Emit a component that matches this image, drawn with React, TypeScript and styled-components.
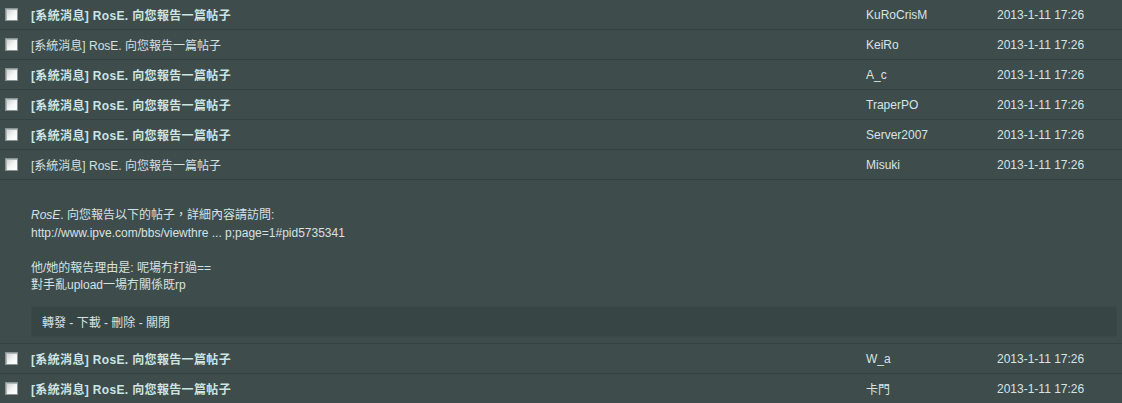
import React from "react";
import styled, { createGlobalStyle } from "styled-components";

const GlobalStyle = createGlobalStyle`
  html, body {
    margin: 0;
    padding: 0;
    background: #3e4c4c;
  }
  body {
    font-family: "Liberation Sans", Arial, "Noto Sans CJK TC", sans-serif;
    font-size: 12px;
    color: #d4e2e2;
  }
`;

type Msg = { from: string; unread: boolean; open?: boolean };

const messages: Msg[] = [
  { from: "KuRoCrisM", unread: true },
  { from: "KeiRo", unread: false },
  { from: "A_c", unread: true },
  { from: "TraperPO", unread: true },
  { from: "Server2007", unread: true },
  { from: "Misuki", unread: false, open: true },
  { from: "W_a", unread: true },
  { from: "卡門", unread: true },
];

const List = styled.div`
  width: 1122px;
  display: flex;
  flex-direction: column;
`;

const Row = styled.div`
  display: grid;
  grid-template-columns: 31px 835px 131px 1fr;
  align-items: center;
  height: 30px;
  box-sizing: border-box;
  border-bottom: 1px solid #354242;
`;

const Check = styled.span`
  display: block;
  width: 11px;
  height: 11px;
  margin-left: 5px;
  border: 1px solid #8a9494;
  background: linear-gradient(135deg, #c8cccc 0%, #f4f6f6 55%, #ffffff 100%);
  box-shadow: inset 1px 1px 0 #b0b6b6;
`;

const Subject = styled.span<{ $unread: boolean }>`
  font-weight: ${(p) => (p.$unread ? "bold" : "normal")};
  color: ${(p) => (p.$unread ? "#cde4e4" : "#d4e0e0")};
  letter-spacing: ${(p) => (p.$unread ? "0.35px" : "0")};
  white-space: nowrap;
`;

const Cell = styled.span`
  color: #d6e4e4;
  white-space: nowrap;
`;

const Detail = styled.div`
  box-sizing: border-box;
  height: 164px;
  padding: 27px 5px 0 31px;
  border-bottom: 1px solid #354242;
  display: flex;
  flex-direction: column;
`;

const Body = styled.div`
  line-height: 17.5px;
  color: #d6e2e2;
`;

const Actions = styled.div`
  margin-top: 11px;
  height: 31px;
  box-sizing: border-box;
  display: flex;
  align-items: center;
  padding-left: 10px;
  background: #384545;
  border: 1px solid #3b4848;
  color: #d6e2e2;
`;

const subject = "[系統消息] RosE. 向您報告一篇帖子";

export default function App() {
  return (
    <>
      <GlobalStyle />
      <List>
        {messages.map((m, i) => (
          <React.Fragment key={i}>
            <Row>
              <Check />
              <Subject $unread={m.unread}>{subject}</Subject>
              <Cell>{m.from}</Cell>
              <Cell>2013-1-11 17:26</Cell>
            </Row>
            {m.open && (
              <Detail>
                <Body>
                  <i>RosE</i>. 向您報告以下的帖子，詳細內容請訪問:
                  <br />
                  http://www.ipve.com/bbs/viewthre ... p;page=1#pid5735341
                  <br />
                  <br />
                  他/她的報告理由是: 呢場冇打過==
                  <br />
                  對手亂upload一場冇關係既rp
                </Body>
                <Actions>轉發 - 下載 - 刪除 - 關閉</Actions>
              </Detail>
            )}
          </React.Fragment>
        ))}
      </List>
    </>
  );
}
